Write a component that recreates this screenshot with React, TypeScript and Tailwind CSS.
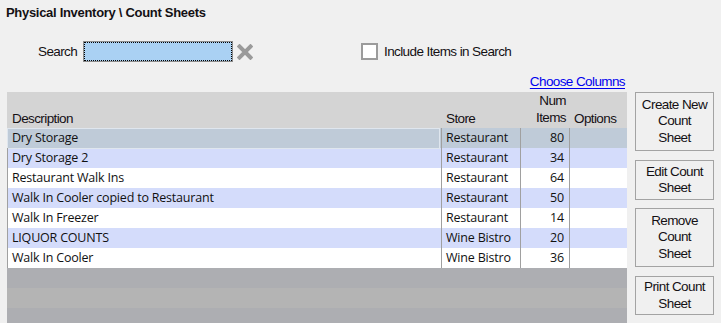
import React from "react";

const rows = [
  { d: "Dry Storage", s: "Restaurant", n: 80 },
  { d: "Dry Storage 2", s: "Restaurant", n: 34 },
  { d: "Restaurant Walk Ins", s: "Restaurant", n: 64 },
  { d: "Walk In Cooler copied to Restaurant", s: "Restaurant", n: 50 },
  { d: "Walk In Freezer", s: "Restaurant", n: 14 },
  { d: "LIQUOR COUNTS", s: "Wine Bistro", n: 20 },
  { d: "Walk In Cooler", s: "Wine Bistro", n: 36 },
];

const arial = "font-['Liberation_Sans',Arial,sans-serif]";
const cell = "font-['Open_Sans',sans-serif] text-[12.5px] tracking-[-0.2px] text-[#111]";

function Btn({ lines, h }: { lines: string[]; h: string }) {
  return (
    <div
      className={`${h} w-[79px] border border-[#a3a3a3] bg-[#f0f0f0] flex flex-col items-center justify-center text-[13.5px] tracking-[-0.6px] leading-[16.5px] text-[#141014] ${arial}`}
    >
      {lines.map((l) => (
        <span key={l}>{l}</span>
      ))}
    </div>
  );
}

export default function App() {
  return (
    <div className={`w-[721px] h-[323px] overflow-hidden bg-[#f0f0f0] ${arial} text-[#141014]`}>
      <div className="h-[26px] pt-[5px] pl-[6px] text-[13px] font-bold leading-[16px] tracking-[-0.3px]">
        Physical Inventory \ Count Sheets
      </div>
      <div className="mt-[15px] h-[21px] flex items-center text-[13.5px] tracking-[-0.6px]">
        <span className="pl-[38px] w-[83px] pt-[2px]">Search</span>
        <div className="w-[150px] h-[21px] border border-[#8c8c8c] p-0">
          <div className="w-full h-full border border-dotted border-black bg-[#aad1f3]" />
        </div>
        <svg className="ml-[4px]" width="16" height="16" viewBox="0 0 16 16">
          <path d="M2.5 2.5 L13.5 13.5 M13.5 2.5 L2.5 13.5" stroke="#9a9a9a" strokeWidth="4" strokeLinecap="square" />
        </svg>
        <div className="ml-[108px] w-[17px] h-[17px] border-2 border-[#9b9b9b] bg-white" />
        <span className="ml-[6px] pt-[2px]">Include Items in Search</span>
      </div>
      <div className="h-[30px] w-[627px] flex justify-end pt-[12px] pr-[2px]">
        <span className="text-[13.5px] tracking-[-0.6px] leading-[16px] text-[#0000ee] underline underline-offset-2">
          Choose Columns
        </span>
      </div>
      <div className="flex">
        <div className="ml-[7px] w-[620px]">
          <div className="h-[36px] bg-[#d4d4d4] grid grid-cols-[434px_79px_49px_58px] text-[13.5px] tracking-[-0.6px] leading-[16.5px]">
            <div className="flex items-end pl-[5px] pb-[1px]">Description</div>
            <div className="flex items-end pl-[5px] pb-[1px]">Store</div>
            <div className="flex flex-col items-end justify-end pr-[3px] pb-[2px]">
              <span>Num</span>
              <span>Items</span>
            </div>
            <div className="flex items-end pl-[5px] pb-[1px]">Options</div>
          </div>
          {rows.map((r, i) => {
            const sel = i === 0;
            const bg = sel ? "bg-[#bfcbd8]" : i % 2 === 1 ? "bg-[#d4dcfb]" : "bg-white";
            return (
              <div key={i} className={`h-[20px] grid grid-cols-[434px_79px_49px_58px] ${bg} ${cell}`}>
                {sel ? (
                  <div className="mr-[1px] border border-[#dfe6ee] flex items-center pl-[4px]">{r.d}</div>
                ) : (
                  <div className="border-l border-[#a0a0a0] flex items-center pl-[4px]">{r.d}</div>
                )}
                <div className="border-l border-[#a0a0a0] flex items-center pl-[4px]">{r.s}</div>
                <div className="border-l border-[#a0a0a0] flex items-center justify-end pr-[5px]">{r.n}</div>
                <div className="border-l border-[#a0a0a0]" />
              </div>
            );
          })}
          <div className="h-[20px] bg-[#adaeb2]" />
          <div className="h-[20px] bg-[#b4b4b4]" />
          <div className="h-[20px] bg-[#adaeb2]" />
        </div>
        <div className="ml-[8px] flex flex-col">
          <Btn h="h-[59px]" lines={["Create New", "Count", "Sheet"]} />
          <div className="h-[9px]" />
          <Btn h="h-[40px]" lines={["Edit Count", "Sheet"]} />
          <div className="h-[8px]" />
          <Btn h="h-[59px]" lines={["Remove", "Count", "Sheet"]} />
          <div className="h-[9px]" />
          <Btn h="h-[39px]" lines={["Print Count", "Sheet"]} />
        </div>
      </div>
    </div>
  );
}
